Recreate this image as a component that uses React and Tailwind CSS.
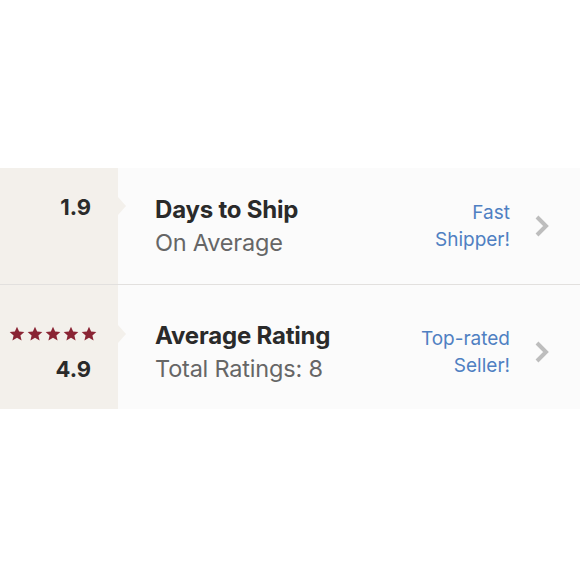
const font = { fontFamily: '"Inter", "Open Sans", sans-serif' };

function Star() {
  return (
    <svg viewBox="0 0 24 24" className="w-[16px] h-[16px]" fill="#8a2434">
      <path d="M12 1l3.2 7.2 7.8.7-5.9 5.2 1.8 7.7L12 17.8l-6.9 4 1.8-7.7L1 8.9l7.8-.7z" />
    </svg>
  );
}

function Chevron() {
  return (
    <svg viewBox="0 0 16 24" className="w-[16px] h-[24px]" fill="none" stroke="#bdbdbd" strokeWidth="4" strokeLinecap="butt" strokeLinejoin="miter">
      <path d="M3 3l9 9-9 9" />
    </svg>
  );
}

function Row({ left, title, sub, badge, h, notchTop, className, pt }) {
  return (
    <div className={"flex " + className} style={{ height: h }}>
      <div className="relative w-[118px] shrink-0 bg-[#f3f0eb] flex flex-col items-end justify-center pr-[27px]">
        {left}
        <div
          className="absolute left-full w-0 h-0 border-y-[9px] border-y-transparent border-l-[8px] border-l-[#f3f0eb]"
          style={{ top: notchTop }}
        />
      </div>
      <div className="flex-1 flex items-center bg-[#fbfbfb] pl-[37px] pr-[30px]" style={{ paddingTop: pt }}>
        <div className="flex-1">
          <div className="text-[24px] font-bold text-[#2a2a2a] leading-[33px] tracking-[-0.2px]">{title}</div>
          <div className="text-[23.5px] text-[#666666] leading-[33px] tracking-[-0.2px]">{sub}</div>
        </div>
        <div className="text-right text-[19px] text-[#4f80c2] leading-[27px] mr-[24px]">{badge}</div>
        <Chevron />
      </div>
    </div>
  );
}

export default function App() {
  return (
    <div className="w-[580px] h-[580px] bg-white" style={font}>
      <div className="h-[168px]" />
      <Row
        h={117}
        notchTop={29}
        pt={0}
        className="border-b border-[#e2e0de]"
        left={<div className="text-[22px] font-bold text-[#2a2a2a] leading-none -mt-[38px]">1.9</div>}
        title="Days to Ship"
        sub="On Average"
        badge={<>Fast<br />Shipper!</>}
      />
      <Row
        h={124}
        notchTop={40}
        pt={10}
        left={
          <div className="flex flex-col items-end gap-[16px] mt-[12px] -mr-[6px]">
            <div className="flex gap-[2px]">
              <Star /><Star /><Star /><Star /><Star />
            </div>
            <div className="text-[22px] font-bold text-[#2a2a2a] leading-none mr-[6px]">4.9</div>
          </div>
        }
        title="Average Rating"
        sub="Total Ratings: 8"
        badge={<>Top-rated<br />Seller!</>}
      />
    </div>
  );
}
